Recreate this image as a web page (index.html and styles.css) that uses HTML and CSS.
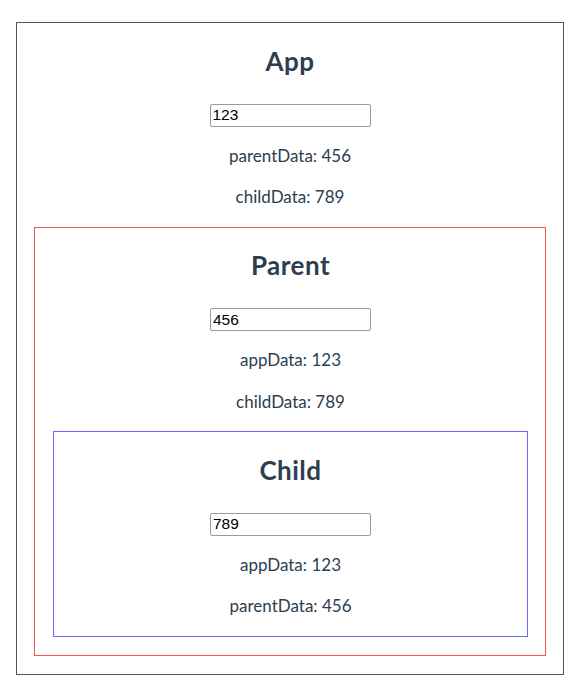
FILE: index.html
```html
<!DOCTYPE html>
<html>
<head>
<meta charset="utf-8">
<link rel="stylesheet" href="styles.css">
</head>
<body>
<div class="box box-app">
  <h2 class="title">App</h2>
  <input class="field" type="text" value="123">
  <p class="line">parentData: 456</p>
  <p class="line">childData: 789</p>
  <div class="box box-parent">
    <h2 class="title">Parent</h2>
    <input class="field" type="text" value="456">
    <p class="line">appData: 123</p>
    <p class="line">childData: 789</p>
    <div class="box box-child">
      <h2 class="title">Child</h2>
      <input class="field" type="text" value="789">
      <p class="line">appData: 123</p>
      <p class="line">parentData: 456</p>
    </div>
  </div>
</div>
</body>
</html>
```

FILE: styles.css
```css
html, body {
  margin: 0;
  padding: 0;
  background: #ffffff;
}

body {
  font-family: Lato, "Noto Sans", sans-serif;
  color: #2c3e50;
  text-align: center;
}

.box {
  padding: 0 17.5px;
}

.box-app {
  border: 1px solid #555555;
  margin: 22px 13px 9px 16px;
  padding: 0 17px 0 17px;
}

.box-parent {
  border: 1px solid #ff5050;
  margin: 17.5px 0 18px;
  padding: 0 17px 0 18px;
}

.box-child {
  border: 1px solid #6b6bff;
  margin: 17.5px 0 18px;
}

.title {
  font-size: 26px;
  line-height: 28px;
  font-weight: 700;
  letter-spacing: 0.5px;
  margin: 23.5px 0 29px;
}

.field {
  display: block;
  margin: 0 auto;
  box-sizing: border-box;
  width: 161px;
  height: 23px;
  padding: 0 2px;
  border: 1px solid #9a9a9a;
  border-radius: 2px;
  font-family: "Liberation Sans", Arial, sans-serif;
  font-size: 15.5px;
  color: #000000;
  text-align: left;
}

.line {
  font-size: 17px;
  line-height: 24px;
  margin: 17.3px 0;
}
```
